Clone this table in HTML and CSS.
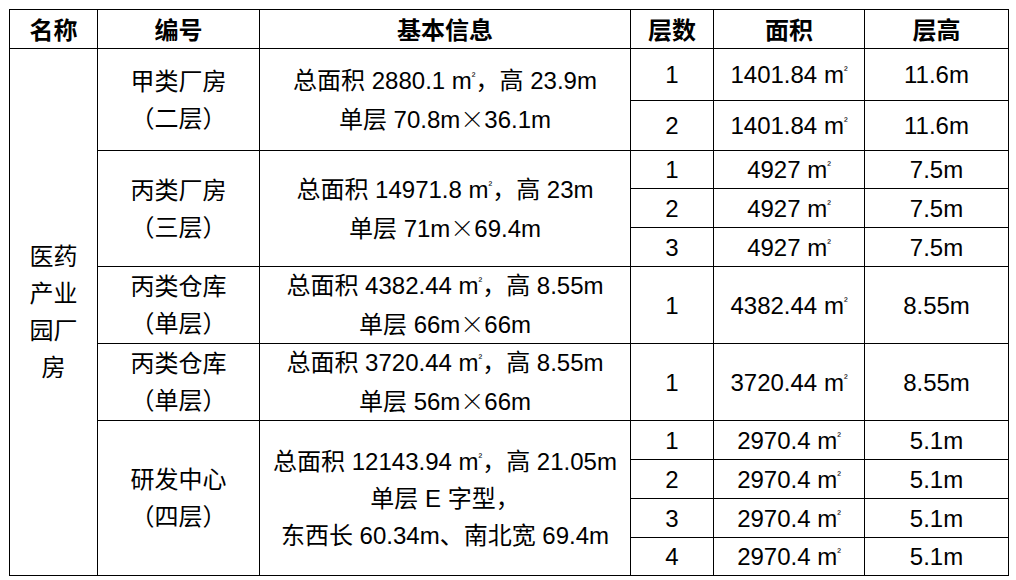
FILE: index.html
```html
<!DOCTYPE html>
<html lang="zh">
<head>
<meta charset="utf-8">
<title>医药产业园厂房</title>
<link rel="stylesheet" href="styles.css">
</head>
<body>
<table class="spec">
  <colgroup>
    <col class="c-name"><col class="c-code"><col class="c-info"><col class="c-floor"><col class="c-area"><col class="c-height">
  </colgroup>
  <thead>
    <tr class="h-head">
      <th>名称</th><th>编号</th><th>基本信息</th><th>层数</th><th>面积</th><th>层高</th>
    </tr>
  </thead>
  <tbody>
    <tr class="h-52">
      <td rowspan="11" class="name">医药<br>产业<br>园厂<br>房</td>
      <td rowspan="2">甲类厂房<br>（二层）</td>
      <td rowspan="2">总面积 2880.1 m<span class="sq">²</span>，高 23.9m<br>单层 70.8m<span class="x">×</span>36.1m</td>
      <td>1</td><td>1401.84 m<span class="sq">²</span></td><td>11.6m</td>
    </tr>
    <tr class="h-50"><td>2</td><td>1401.84 m<span class="sq">²</span></td><td>11.6m</td></tr>
    <tr class="h-38">
      <td rowspan="3">丙类厂房<br>（三层）</td>
      <td rowspan="3">总面积 14971.8 m<span class="sq">²</span>，高 23m<br>单层 71m<span class="x">×</span>69.4m</td>
      <td>1</td><td>4927 m<span class="sq">²</span></td><td>7.5m</td>
    </tr>
    <tr class="h-39"><td>2</td><td>4927 m<span class="sq">²</span></td><td>7.5m</td></tr>
    <tr class="h-39"><td>3</td><td>4927 m<span class="sq">²</span></td><td>7.5m</td></tr>
    <tr class="h-76">
      <td>丙类仓库<br>（单层）</td>
      <td>总面积 4382.44 m<span class="sq">²</span>，高 8.55m<br>单层 66m<span class="x">×</span>66m</td>
      <td>1</td><td>4382.44 m<span class="sq">²</span></td><td>8.55m</td>
    </tr>
    <tr class="h-75">
      <td>丙类仓库<br>（单层）</td>
      <td>总面积 3720.44 m<span class="sq">²</span>，高 8.55m<br>单层 56m<span class="x">×</span>66m</td>
      <td>1</td><td>3720.44 m<span class="sq">²</span></td><td>8.55m</td>
    </tr>
    <tr class="h-39">
      <td rowspan="4">研发中心<br>（四层）</td>
      <td rowspan="4">总面积 12143.94 m<span class="sq">²</span>，高 21.05m<br>单层 E 字型，<br>东西长 60.34m、南北宽 69.4m</td>
      <td>1</td><td>2970.4 m<span class="sq">²</span></td><td>5.1m</td>
    </tr>
    <tr class="h-39"><td>2</td><td>2970.4 m<span class="sq">²</span></td><td>5.1m</td></tr>
    <tr class="h-39"><td>3</td><td>2970.4 m<span class="sq">²</span></td><td>5.1m</td></tr>
    <tr class="h-36"><td>4</td><td>2970.4 m<span class="sq">²</span></td><td>5.1m</td></tr>
  </tbody>
</table>
</body>
</html>
```

FILE: styles.css
```css
html, body {
  margin: 0;
  padding: 0;
  background: #fff;
}

body {
  padding: 9px 0 0 9px;
  font-family: "Liberation Sans", "Noto Sans CJK SC", sans-serif;
  font-size: 24px;
  color: #000;
}

.spec {
  border-collapse: collapse;
  table-layout: fixed;
  width: 999px;
}

.c-name { width: 88px; }
.c-code { width: 162px; }
.c-info { width: 371px; }
.c-floor { width: 83px; }
.c-area { width: 151px; }
.c-height { width: 144px; }

.spec th,
.spec td {
  border: 1px solid #000;
  padding: 0;
  text-align: center;
  vertical-align: middle;
  line-height: 37px;
  font-weight: normal;
}

.spec th {
  font-weight: bold;
  font-family: "Noto Sans CJK SC", sans-serif;
  line-height: 36px;
}

.h-head { height: 39px; }
.h-52 { height: 52px; }
.h-50 { height: 50px; }
.h-38 { height: 38px; }
.h-39 { height: 39px; }
.h-36 { height: 36px; }
.h-76 { height: 76px; }
.h-75 { height: 75px; }

.sq {
  font-size: 11px;
  vertical-align: 9px;
  line-height: 0;
}

.x {
  font-family: "Noto Sans CJK SC", sans-serif;
  font-weight: 300;
}
```
